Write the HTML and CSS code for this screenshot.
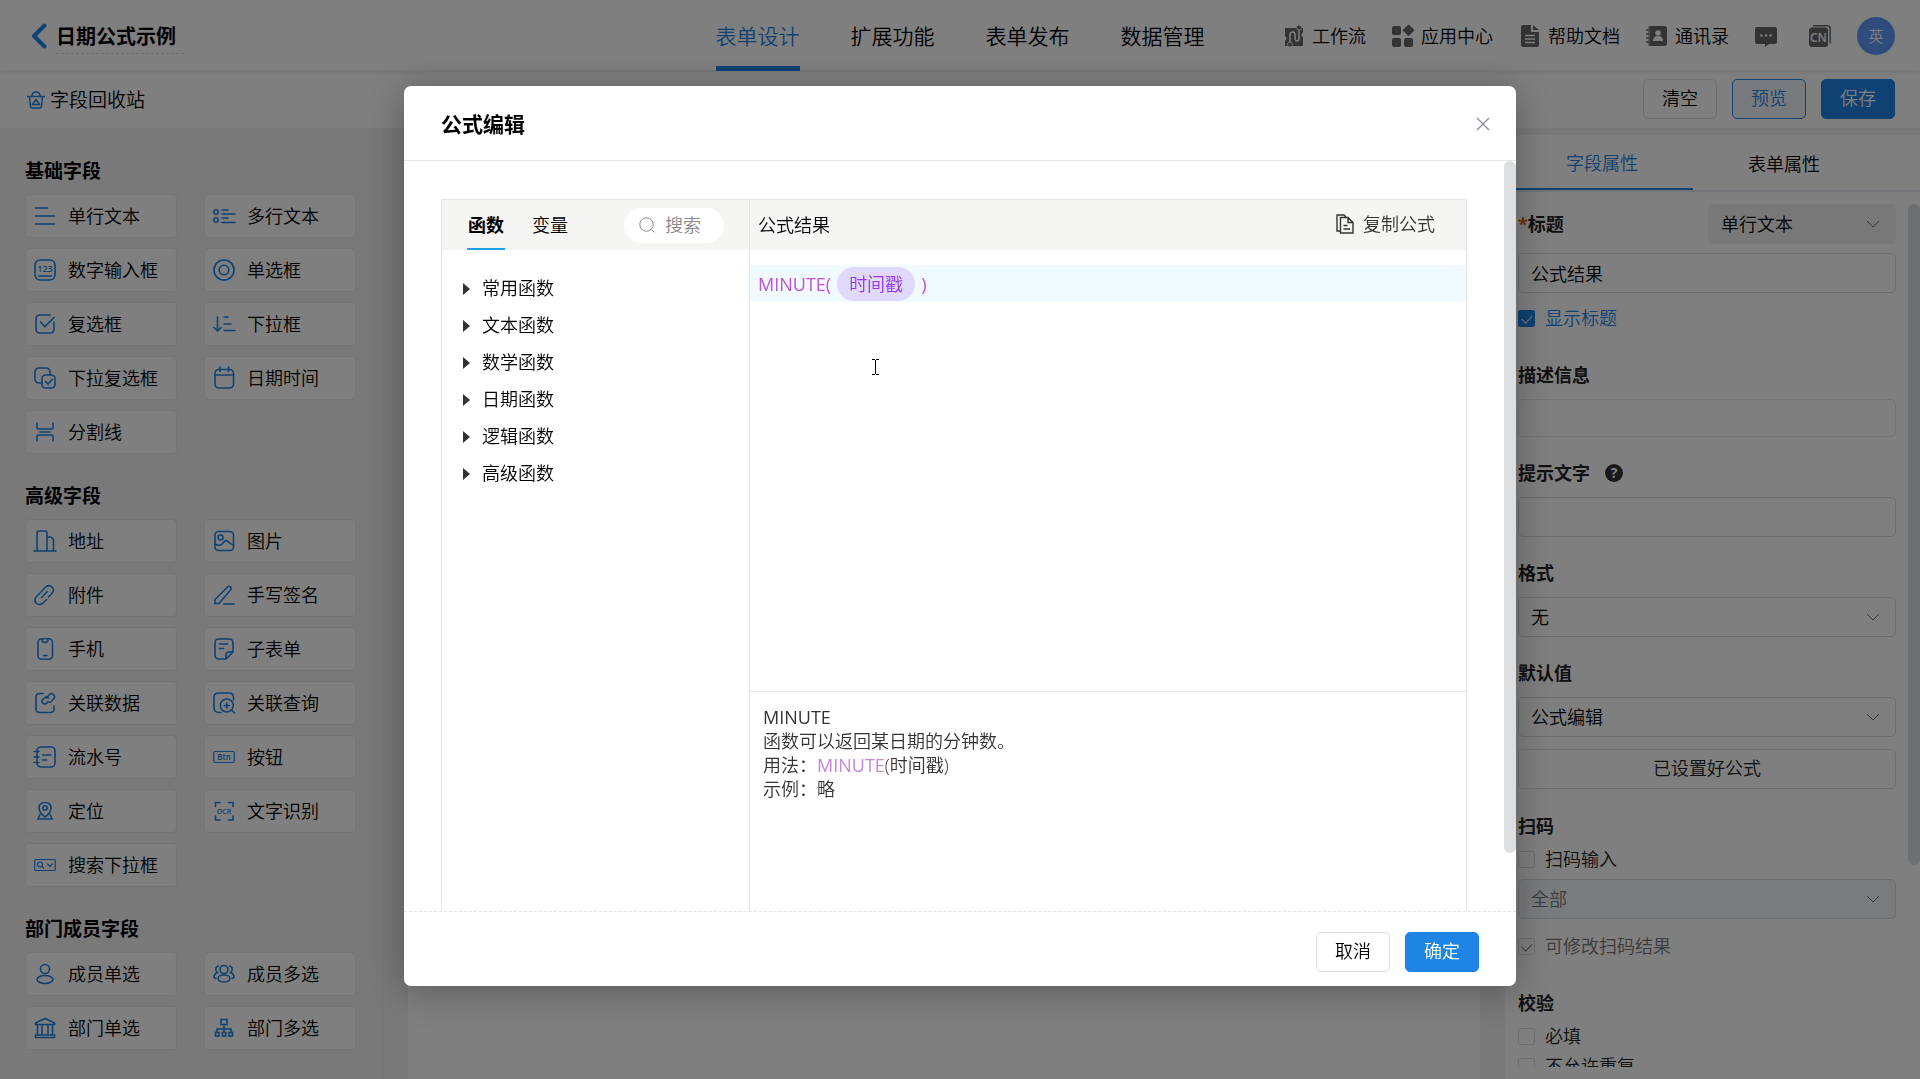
FILE: index.html
```html
<!DOCTYPE html>
<html lang="zh-CN">
<head>
  <meta charset="UTF-8" />
  <meta name="viewport" content="width=device-width, initial-scale=1" />
  <title>日期公式示例</title>
  <link rel="stylesheet" href="styles.css">
</head>
<body>

  <header class="topbar">
    <div class="topbar-left">
      <button class="back" aria-label="返回">
        <svg width="16" height="26" viewBox="0 0 16 26"><path d="M13.5 2.5L3 13l10.5 10.5" fill="none" stroke="currentColor" stroke-width="4" stroke-linecap="round" stroke-linejoin="round"/></svg>
      </button>
      <h1>日期公式示例</h1>
    </div>
    <nav class="topnav">
      <a href="#design" class="active">表单设计</a>
      <a href="#extend">扩展功能</a>
      <a href="#publish">表单发布</a>
      <a href="#data">数据管理</a>
    </nav>
    <div class="topbar-right">
      <a href="#flow" class="tool">
        <svg class="ic-fill" viewBox="0 0 22 22"><path d="M2 3h18v4q-3 3.500 0 5v9H2v-5q3-3 0-5z"/><path d="M7 18v-8q0-3 2.500-3t2.500 3v3q0 3 2 3t2-3V4" fill="none" stroke="#fff" stroke-width="1.500"/><circle cx="16" cy="2.500" r="2.500" stroke="#fff" stroke-width=".8"/><circle cx="7" cy="19.500" r="2.500" stroke="#fff" stroke-width=".8"/></svg>
        工作流
      </a>
      <a href="#apps" class="tool">
        <svg class="ic-fill" viewBox="0 0 22 22"><rect x="0" y="1" width="9" height="9" rx="2"/><rect x="0" y="13" width="9" height="9" rx="2"/><rect x="12" y="13" width="9" height="9" rx="2"/><rect x="12.500" y="1" width="8.500" height="8.500" rx="1" transform="rotate(45 16.700 5)"/></svg>
        应用中心
      </a>
      <a href="#docs" class="tool">
        <svg class="ic-fill" viewBox="0 0 22 22"><path d="M4 0h8v7h8v13q0 2-2 2H4q-2 0-2-2V2q0-2 2-2zM14 0l6 5h-6z"/><path d="M6 10.500h10M6 14h10M6 17.500h10" stroke="#fff" stroke-width="1.500"/></svg>
        帮助文档
      </a>
      <a href="#contacts" class="tool">
        <svg class="ic-fill" viewBox="0 0 22 22"><rect x="2" y="1" width="19" height="20" rx="3"/><path d="M0 5h4M0 9h4M0 13h4M0 17h4" stroke="#fff" stroke-width="3"/><path d="M0 5h4M0 9h4M0 13h4M0 17h4" stroke="#666" stroke-width="1.500"/><circle cx="12" cy="8" r="2.800" fill="#fff"/><path d="M7 16q0-5 5-5t5 5z" fill="#fff"/></svg>
        通讯录
      </a>
      <a href="#messages" class="tool" aria-label="消息">
        <svg class="ic-fill" viewBox="0 0 22 22"><path d="M2 2h18q2 0 2 2v13q0 2-2 2h-6l-4 3v-3H2q-2 0-2-2V4q0-2 2-2z"/><g fill="#fff"><circle cx="6.500" cy="10.500" r="1.200"/><circle cx="11" cy="10.500" r="1.200"/><circle cx="15.500" cy="10.500" r="1.200"/></g></svg>
      </a>
      <a href="#lang" class="tool lang" aria-label="语言">
        <svg class="ic-fill" viewBox="0 0 22 22"><path d="M4 .800h14q3.200 0 3.200 3v15" fill="none" stroke="#666" stroke-width="1.400"/><rect x="0" y="2.500" width="19" height="19.500" rx="3"/><text x="9.500" y="17" font-size="12" font-weight="600" text-anchor="middle" fill="#fff">CN</text></svg>
      </a>
      <button class="avatar">英</button>
    </div>
  </header>

  <div class="subbar">
    <a href="#recycle" class="recycle">
      <svg width="18" height="18" viewBox="0 0 18 18" fill="none" stroke="currentColor" stroke-width="1.500"><path d="M0 5.500h18M2.500 5.500l1 10q.2 1.500 1.500 1.500h8q1.300 0 1.500-1.500l1-10M5 5q0-4 4-4t4 4M9 8.500l-3.500 5h7z"/></svg>
      字段回收站
    </a>
    <div class="actions">
      <button class="btn">清空</button>
      <button class="btn btn-plain">预览</button>
      <button class="btn btn-primary">保存</button>
    </div>
  </div>

  <div class="workspace">
    <aside class="sidebar">
      <section>
        <h2>基础字段</h2>
        <div class="fields">
          <button class="field"><svg viewBox="0 0 22 22"><path d="M1.500 3h12M1.500 11h19M1.500 19h19"/></svg>单行文本</button>
          <button class="field"><svg viewBox="0 0 22 22"><circle cx="3" cy="7" r="2.200"/><circle cx="3" cy="15" r="2.200"/><path d="M9 5h6M9 9h13M9 13h6M9 17.500h13"/></svg>多行文本</button>
          <button class="field"><svg viewBox="0 0 22 22"><rect x="1" y="1" width="20" height="20" rx="5"/><text x="11" y="13" font-size="9" text-anchor="middle">123</text><path d="M4.500 17h13"/></svg>数字输入框</button>
          <button class="field"><svg viewBox="0 0 22 22"><circle cx="11" cy="11" r="10"/><circle cx="11" cy="11" r="4.800"/></svg>单选框</button>
          <button class="field"><svg viewBox="0 0 22 22"><path d="M16 2H6Q2 2 2 6v10q0 4 4 4h10q4 0 4-4V9M6.500 9l4.500 4.500 9-9"/></svg>复选框</button>
          <button class="field"><svg viewBox="0 0 22 22"><path d="M4.500 4v14M1 14.500L4.500 18 8 14.500M11 4h4M11 11h7M11 17.500h11"/></svg>下拉框</button>
          <button class="field"><svg viewBox="0 0 22 22"><path d="M8 16H5q-4 0-4-4V5q0-4 4-4h7q4 0 4 4v3"/><rect x="8" y="8" width="13" height="13" rx="3.500"/><path d="M11.500 14.500l2.500 2.500 4.500-5"/></svg>下拉复选框</button>
          <button class="field"><svg viewBox="0 0 22 22"><rect x="2" y="2.500" width="18.500" height="18.500" rx="4"/><path d="M2 8h18.500M7 0v4.500M15.500 0v4.500"/></svg>日期时间</button>
          <button class="field"><svg viewBox="0 0 22 22"><path d="M3 2v5q0 1 1 1h14q1 0 1-1V2M6 11h10M3 20v-5q0-1 1-1h14q1 0 1 1v5"/></svg>分割线</button>
        </div>
      </section>

      <section>
        <h2>高级字段</h2>
        <div class="fields">
          <button class="field"><svg viewBox="0 0 22 22"><path d="M0 21h22M3 21V2.500Q3 1 4.500 1h7Q13 1 13 2.500V21M13 7h4l2.500 2.500V21"/></svg>地址</button>
          <button class="field"><svg viewBox="0 0 22 22"><rect x="2" y="1.500" width="18.500" height="19" rx="3.500"/><circle cx="7.500" cy="7.500" r="2.500"/><path d="M2 14q5 3 8-1t5-1.500 5.500 3.500"/></svg>图片</button>
          <button class="field"><svg viewBox="0 0 22 22"><path d="M7.500 7.500l3.500-4q4-3.500 7-.5t-.5 7l-3 3M6.500 8.500L3 12q-4 4-1 7t7 0l3.500-3.500M7.500 13.500l6-6"/></svg>附件</button>
          <button class="field"><svg viewBox="0 0 22 22"><path d="M2 19.500v-4L14.500 3q1.500-1.500 3 0t0 3L6 19.500zM10.500 20H21"/></svg>手写签名</button>
          <button class="field"><svg viewBox="0 0 22 22"><rect x="4" y="0.800" width="14.500" height="20.400" rx="3.500"/><path d="M8 1.500q0 3 3 3t3-3M9.500 17.500h3.500"/></svg>手机</button>
          <button class="field"><svg viewBox="0 0 22 22"><path d="M13 21H6q-4 0-4-4V5q0-4 4-4h10q4 0 4 4v9zM13 21v-4q0-3 3-3h4M6.500 6h8M6.500 10.500h4"/></svg>子表单</button>
          <button class="field"><svg viewBox="0 0 22 22"><path d="M9 1.500H5.500Q2 1.500 2 5v12q0 3.500 3.500 3.500H16q4 0 4-4V14M13 11q-3 2-4.500 0t.5-3.500l2-2q2-1.500 3.500.5M12.500 6l3-3.500q2-2 4 0t.5 4l-3 3q-2 1.500-3.500 0"/></svg>关联数据</button>
          <button class="field"><svg viewBox="0 0 22 22"><path d="M8 20.500H6q-5 0-5-5V5.500q0-4.500 4.500-4.500H16q4.500 0 4.500 4.500V8"/><circle cx="13.800" cy="13.500" r="6.500"/><path d="M13.800 11v5M11.300 13.500h5M18.500 18l3 3"/></svg>关联查询</button>
          <button class="field"><svg viewBox="0 0 22 22"><rect x="3" y="1" width="18" height="20" rx="4"/><path d="M0 5.500h5M0 11h5M0 16.500h5M8.500 9H17M8.500 14h4"/></svg>流水号</button>
          <button class="field"><svg viewBox="0 0 22 22"><rect x="0.700" y="5.500" width="20.600" height="11" rx="1.500" stroke-width="1.200"/><text x="11" y="14" font-size="8" text-anchor="middle">Btn</text></svg>按钮</button>
          <button class="field"><svg viewBox="0 0 22 22"><path d="M11 17q-6-4.500-6-9 0-5.500 6-5.500t6 5.500q0 4.500-6 9zM6 14.500l-2 4.500h14l-2-4.500"/><circle cx="11" cy="8" r="2.200"/></svg>定位</button>
          <button class="field"><svg viewBox="0 0 22 22"><path d="M2.500 6.500v-4h4.500M15.500 2.500H20v4M20 16v4h-4.500M7 20H2.500v-4"/><text x="11" y="13.500" font-size="7" text-anchor="middle">OCR</text></svg>文字识别</button>
          <button class="field"><svg viewBox="0 0 22 22" class="thin"><rect x="0.700" y="5.500" width="20.600" height="11" rx="1"/><circle cx="6" cy="10.500" r="2.500"/><path d="M8 12.500l1.500 1.500M13.500 10l2.500 2.500 2.500-2.500"/></svg>搜索下拉框</button>
        </div>
      </section>

      <section>
        <h2>部门成员字段</h2>
        <div class="fields">
          <button class="field"><svg viewBox="0 0 22 22"><circle cx="11" cy="6" r="4.500"/><ellipse cx="11" cy="16.500" rx="8" ry="4"/></svg>成员单选</button>
          <button class="field"><svg viewBox="0 0 22 22"><circle cx="11" cy="6.500" r="4"/><ellipse cx="11" cy="15.500" rx="6" ry="3.500"/><path d="M5.500 3Q2 4 3 7.500q.5 1.500 1.500 2Q1 11 1 14.500l2 1M16.500 3Q20 4 19 7.500q-.5 1.500-1.500 2Q21 11 21 14.500l-2 1"/></svg>成员多选</button>
          <button class="field"><svg viewBox="0 0 22 22"><path d="M1.500 7.500V6L11 1.500 20.500 6v1.500zM3.500 8v10M8 8v10M14 8v10M18.500 8v10M1.500 20.500V18h19v2.500z"/></svg>部门单选</button>
          <button class="field"><svg viewBox="0 0 22 22"><rect x="8" y="2.500" width="6" height="5"/><path d="M11 8v7M4 15v-3h14v3"/><rect x="2.500" y="15.500" width="3.500" height="3.500"/><rect x="9.300" y="15.500" width="3.500" height="3.500"/><rect x="16" y="15.500" width="3.500" height="3.500"/></svg>部门多选</button>
        </div>
      </section>
    </aside>

    <main class="canvas"></main>

    <aside class="props">
      <div class="props-tabs">
        <button class="active">字段属性</button>
        <button>表单属性</button>
      </div>
      <div class="props-body">
        <div class="title-row">
          <label for="title"><span class="required">*</span>标题</label>
          <div class="select select-type">
            <select aria-label="字段类型"><option>单行文本</option></select>
            <svg viewBox="0 0 14 8"><path d="M1 1l6 6 6-6"/></svg>
          </div>
        </div>
        <input class="text" id="title" type="text" value="公式结果">
        <label class="check checked first"><input type="checkbox" checked>显示标题</label>

        <label class="name" for="desc">描述信息</label>
        <input class="text light" id="desc" type="text">

        <label class="name" for="hint">提示文字 <span class="help">?</span></label>
        <input class="text" id="hint" type="text">

        <label class="name" for="format">格式</label>
        <div class="select">
          <select id="format"><option>无</option></select>
          <svg viewBox="0 0 14 8"><path d="M1 1l6 6 6-6"/></svg>
        </div>

        <label class="name" for="default">默认值</label>
        <div class="select">
          <select id="default"><option>公式编辑</option></select>
          <svg viewBox="0 0 14 8"><path d="M1 1l6 6 6-6"/></svg>
        </div>
        <button class="btn btn-block">已设置好公式</button>

        <h3 class="name">扫码</h3>
        <label class="check"><input type="checkbox">扫码输入</label>
        <div class="select disabled">
          <select aria-label="扫码类型" disabled><option>全部</option></select>
          <svg viewBox="0 0 14 8"><path d="M1 1l6 6 6-6"/></svg>
        </div>
        <label class="check disabled"><input type="checkbox" checked disabled>可修改扫码结果</label>

        <h3 class="name">校验</h3>
        <label class="check"><input type="checkbox">必填</label>
        <label class="check"><input type="checkbox">不允许重复</label>
      </div>
      <div class="thumb"></div>
    </aside>
  </div>

  <div class="overlay">
    <div class="dialog" role="dialog" aria-labelledby="dialog-title">
      <div class="dialog-header">
        <h2 id="dialog-title">公式编辑</h2>
        <button class="close" aria-label="关闭">
          <svg width="14" height="14" viewBox="0 0 14 14"><path d="M1 1l12 12M13 1L1 13" stroke="currentColor" stroke-width="1.300"/></svg>
        </button>
      </div>
      <div class="dialog-body">
        <div class="formula">
          <div class="func-pane">
            <div class="pane-head">
              <div class="func-tabs">
                <button class="active">函数</button>
                <button>变量</button>
              </div>
              <div class="search">
                <svg width="16" height="16" viewBox="0 0 16 16" fill="none" stroke="currentColor"><circle cx="7.500" cy="7.500" r="6.700"/><path d="M12.500 12.500l3 3"/></svg>
                <input type="text" placeholder="搜索" aria-label="搜索">
              </div>
            </div>
            <ul class="func-list">
              <li>常用函数</li>
              <li>文本函数</li>
              <li>数学函数</li>
              <li>日期函数</li>
              <li>逻辑函数</li>
              <li>高级函数</li>
            </ul>
          </div>
          <div class="edit-pane">
            <div class="pane-head">
              <span>公式结果</span>
              <button class="copy">
                <svg width="18" height="20" viewBox="0 0 18 20" fill="none" stroke="currentColor" stroke-width="1.400"><path d="M4.500 17H1V1h7l2 2M4.500 3.500H12l5 5V19H4.500zM12 3.500v5h5M7.500 11.500h4M7.500 15H14"/></svg>
                复制公式
              </button>
            </div>
            <div class="editor">
              <div class="code-line"><span>MINUTE(</span><span class="chip">时间戳</span><span>)</span></div>
            </div>
            <div class="tips">
              <p class="fn-name">MINUTE</p>
              <p>函数可以返回某日期的分钟数。</p>
              <p>用法：<span class="fn">MINUTE</span>(时间戳)</p>
              <p>示例：略</p>
            </div>
          </div>
        </div>
        <div class="thumb"></div>
      </div>
      <div class="dialog-footer">
        <button class="btn">取消</button>
        <button class="btn btn-primary">确定</button>
      </div>
    </div>
  </div>

  <!-- text cursor over the editor -->
  <svg class="ibeam" width="7" height="16" viewBox="0 0 7 16"><path d="M0 .500h3M4 .500h3M3.500 1v14M0 15.500h3M4 15.500h3" stroke="#000"/></svg>

</body>
</html>
```
FILE: styles.css
```css
* {
  box-sizing: border-box;
}

body {
  margin: 0;
  height: 100vh;
  overflow: hidden;
  display: flex;
  flex-direction: column;
  background: #fff;
  color: #000;
  font-family: "Open Sans", "Noto Sans CJK SC", sans-serif;
  font-size: 18px;
  font-weight: 350;
  line-height: 24px;
}

h1, h2, h3, p, ul {
  margin: 0;
  padding: 0;
}

a {
  color: inherit;
  text-decoration: none;
}

button, input, select {
  font: inherit;
  color: inherit;
  margin: 0;
  padding: 0;
  border: none;
  background: none;
}

/* top bar */
.topbar {
  position: relative;
  display: grid;
  grid-template-columns: 1fr auto 1fr;
  height: 70px;
  padding: 0 25px;
  background: #fff;
  box-shadow: 0 1px 6px rgba(0, 0, 0, 0.12);
}

.topbar-left {
  display: flex;
  align-items: center;
  gap: 9px;
  padding-left: 6px;
}

.back {
  display: flex;
  color: #1e85e5;
}

.topbar h1 {
  width: 128px;
  padding-top: 4px;
  font-size: 20px;
  font-weight: 700;
  line-height: 32px;
  border-bottom: 1px dashed #dcdcdc;
  white-space: nowrap;
}

.topnav {
  display: flex;
  gap: 51px;
  font-size: 21px;
}

.topnav a {
  height: 71px;
  line-height: 73px;
}

.topnav .active {
  color: #1e85e5;
  border-bottom: 5px solid #1e85e5;
}

.topbar-right {
  display: flex;
  align-items: center;
  justify-content: flex-end;
  gap: 26px;
}

.tool {
  display: flex;
  align-items: center;
  gap: 7px;
}

.ic-fill {
  width: 22px;
  height: 22px;
  fill: #666;
  overflow: visible;
}

.lang {
  margin-left: 6px;
}

.avatar {
  width: 38px;
  height: 38px;
  border-radius: 50%;
  background: #5c98f8;
  color: #fff;
  font-size: 15px;
}

/* second bar */
.subbar {
  display: flex;
  justify-content: space-between;
  align-items: center;
  height: 58px;
  padding: 0 25px 0 27px;
}

.recycle {
  display: flex;
  align-items: center;
  gap: 5px;
  padding-top: 2px;
  font-size: 19px;
}

.recycle svg {
  color: #1e85e5;
}

.actions {
  display: flex;
  gap: 15px;
}

.btn {
  height: 40px;
  padding: 0 18px 2px;
  border: 1px solid #dcdfe6;
  border-radius: 5px;
  background: #fff;
}

.btn-plain {
  color: #1e85e5;
  border-color: #1e85e5;
  background: #eef6fd;
}

.btn-primary {
  color: #fff;
  border-color: #1e85e5;
  background: #1e85e5;
}

/* three columns */
.workspace {
  flex: 1;
  min-height: 0;
  display: flex;
  background: #f2f2f2;
}

.sidebar {
  width: 383px;
  padding: 30px 25px;
  border-right: 1px solid #e6e6e6;
  overflow: hidden;
}

.sidebar section {
  margin-bottom: 29px;
}

.sidebar h2 {
  margin-bottom: 10px;
  font-size: 19px;
  font-weight: 700;
  line-height: 26px;
}

.fields {
  display: grid;
  grid-template-columns: 152px 152px;
  gap: 10px 27px;
}

.field {
  display: flex;
  align-items: center;
  gap: 12px;
  height: 44px;
  padding: 0 8px;
  border: 1px solid #e8e8e8;
  border-radius: 4px;
  background: #fff;
  white-space: nowrap;
}

.field svg {
  flex: none;
  width: 22px;
  height: 22px;
  fill: none;
  stroke: #1e85e5;
  stroke-width: 1.6;
  stroke-linecap: round;
  overflow: visible;
}

.field .thin {
  stroke-width: 1.2;
}

.field svg text {
  fill: #1e85e5;
  stroke: none;
  font-weight: 600;
}

.canvas {
  flex: 1;
  margin: 25px 25px 0;
  background: #fff;
}

/* field properties */
.props {
  position: relative;
  display: flex;
  flex-direction: column;
  width: 415px;
  margin-top: 7px;
  padding-bottom: 12px;
  background: #fff;
}

.props-tabs {
  display: flex;
  padding-left: 6px;
  border-bottom: 2px solid #e4e7ed;
}

.props-tabs button {
  width: 182px;
  height: 55px;
  padding-top: 2px;
}

.props-tabs .active {
  color: #1e85e5;
  border-bottom: 2px solid #1e85e5;
}

.props-body {
  flex: 1;
  min-height: 0;
  overflow: hidden;
  padding: 12px 24px 0 13px;
  color: #222;
}

.title-row {
  display: flex;
  justify-content: space-between;
  align-items: center;
  margin-bottom: 9px;
  font-weight: 700;
}

.required {
  color: #e8590c;
}

.select {
  position: relative;
  height: 40px;
  font-weight: 350;
}

.select select {
  width: 100%;
  height: 100%;
  padding: 0 12px;
  appearance: none;
  border: 1px solid #d9dce3;
  border-radius: 5px;
  color: #000;
  opacity: 1;
}

.select svg {
  position: absolute;
  right: 16px;
  top: 16px;
  width: 14px;
  height: 8px;
  fill: none;
  stroke: #777;
  pointer-events: none;
}

.select-type {
  width: 188px;
}

.select-type select {
  border-color: #f0f0f0;
  background: #f0f0f0;
}

.select.disabled select {
  background: #f5f7fa;
  color: #777;
}

.text {
  display: block;
  width: 100%;
  height: 40px;
  padding: 0 12px;
  border: 1px solid #d9dce3;
  border-radius: 5px;
  color: #000;
}

.light {
  height: 38px;
  border-color: #e6e6e6;
}

.name {
  display: flex;
  align-items: center;
  gap: 15px;
  margin: 24px 0 12px;
  font-size: 18px;
  font-weight: 700;
  line-height: 24px;
}

.help {
  width: 18px;
  height: 18px;
  border-radius: 50%;
  background: #333;
  color: #fff;
  font-size: 14px;
  line-height: 18px;
  text-align: center;
}

.check {
  display: flex;
  align-items: center;
  gap: 10px;
  line-height: 30px;
}

.check input {
  appearance: none;
  width: 17px;
  height: 17px;
  border: 1px solid #d9dce3;
  border-radius: 2px;
}

.check input:checked::after {
  content: "";
  display: block;
  width: 9px;
  height: 5px;
  margin: 4px 0 0 3px;
  border: solid #777;
  border-width: 0 0 1px 1px;
  transform: rotate(-45deg);
}

.check.checked {
  color: #1e85e5;
}

.checked input {
  border-color: #1e85e5;
  background: #1e85e5;
}

.check.checked input:checked::after {
  border-color: #fff;
}

.check.first {
  margin: 10px 0 30px;
}

.check.disabled {
  margin: 12px 0 30px;
  color: #777;
}

.btn-block {
  display: block;
  width: 100%;
  margin: 12px 0 25px;
  color: #222;
}

h3.name {
  margin-bottom: 6px;
}

.check + .select {
  margin-top: 5px;
}

.thumb {
  position: absolute;
  top: 69px;
  right: 0;
  width: 12px;
  height: 661px;
  border-radius: 6px;
  background: #dddee0;
}

/* dialog */
.overlay {
  position: fixed;
  inset: 0;
  display: flex;
  justify-content: center;
  align-items: flex-start;
  padding-top: 86px;
  background: rgba(0, 0, 0, 0.5);
}

.dialog {
  display: flex;
  flex-direction: column;
  width: 58%;
  max-width: 1112px;
  height: calc(100vh - 179px);
  border-radius: 7px;
  background: #fff;
  box-shadow: 0 5px 40px rgba(0, 0, 0, 0.3);
}

.dialog-header {
  display: flex;
  justify-content: space-between;
  align-items: center;
  height: 75px;
  padding: 2px 26px 0 37px;
  border-bottom: 1px solid #e4e5e7;
}

.dialog-header h2 {
  font-size: 21px;
  font-weight: 700;
}

.close {
  display: flex;
  color: #8a8d93;
}

.dialog-body {
  position: relative;
  flex: 1;
  min-height: 0;
  overflow: hidden;
  padding: 38px 49px 0 37px;
}

.dialog-body .thumb {
  top: 0;
  height: 692px;
}

.formula {
  display: flex;
  height: 750px;
  border: 1px solid #e4e5e7;
}

.func-pane {
  width: 308px;
  border-right: 1px solid #e4e5e7;
}

.edit-pane {
  flex: 1;
  display: flex;
  flex-direction: column;
}

.pane-head {
  display: flex;
  justify-content: space-between;
  align-items: center;
  height: 50px;
  background: #f5f5f3;
}

.func-pane .pane-head {
  padding: 0 25px;
}

.edit-pane .pane-head {
  padding: 0 31px 0 8px;
}

.func-tabs {
  display: flex;
  gap: 26px;
}

.func-tabs button {
  height: 50px;
  padding: 2px 1px 0;
  border-bottom: 2px solid transparent;
}

.func-tabs .active {
  font-weight: 700;
  border-bottom-color: #1ea0f2;
}

.search {
  display: flex;
  align-items: center;
  gap: 10px;
  width: 100px;
  height: 35px;
  padding: 0 15px;
  border-radius: 18px;
  background: #fff;
  color: #888;
}

.search svg {
  flex: none;
}

.search input {
  width: 100%;
  min-width: 0;
  outline: none;
}

.search input::placeholder {
  color: #888;
}

.func-list {
  padding: 20px 21px;
  list-style: none;
}

.func-list li {
  display: flex;
  align-items: center;
  gap: 12px;
  line-height: 37px;
}

.func-list li::before {
  content: "";
  border: solid transparent;
  border-width: 6px 0 6px 7px;
  border-left-color: #333;
}

.copy {
  display: flex;
  align-items: center;
  gap: 9px;
  padding-bottom: 3px;
  color: #333;
}

.editor {
  height: 441px;
  padding-top: 15px;
}

.code-line {
  display: flex;
  align-items: center;
  gap: 6px;
  height: 37px;
  padding-left: 8px;
  background: #f0faff;
  color: #c44fe0;
  font-weight: 400;
}

.chip {
  padding: 0 12px;
  border-radius: 17px;
  background: #e1d9fb;
  color: #9235ee;
  font-weight: 350;
  line-height: 34px;
}

.tips {
  flex: 1;
  padding: 13px;
  border-top: 1px solid #e4e5e7;
  color: #333;
}

.fn-name,
.fn {
  font-weight: 400;
}

.fn {
  color: #c586dc;
}

.dialog-footer {
  display: flex;
  justify-content: flex-end;
  align-items: center;
  gap: 15px;
  height: 75px;
  padding: 6px 37px 0 0;
  border-top: 1px dashed #e4e5e7;
}

.ibeam {
  position: fixed;
  left: 872px;
  top: 359px;
}
```
